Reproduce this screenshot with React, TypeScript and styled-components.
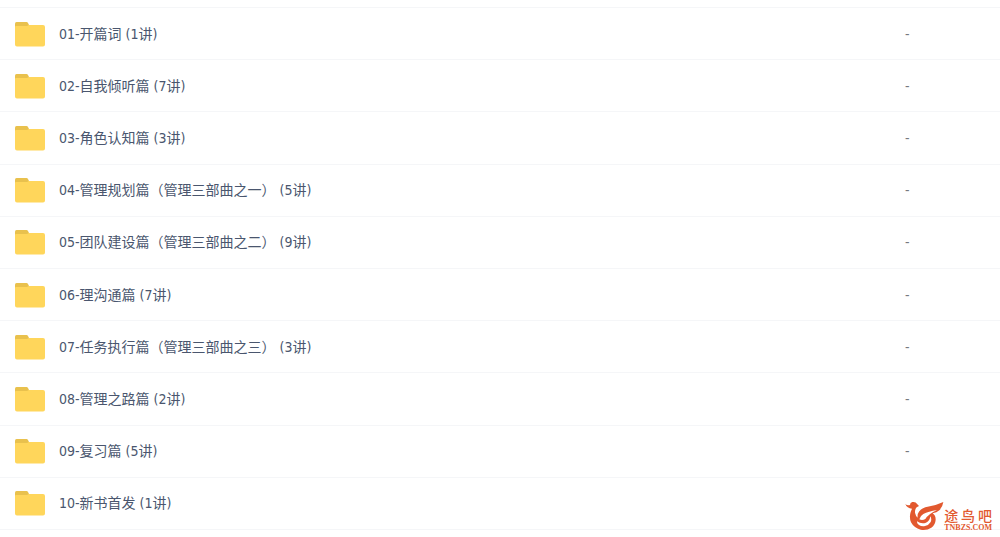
import React from "react";
import styled, { createGlobalStyle } from "styled-components";

const GlobalStyle = createGlobalStyle`
  * { box-sizing: border-box; }
  body {
    margin: 0;
    background: #fff;
    color: #4a566e;
    font: 14px/20px "DejaVu Sans Condensed", "Noto Sans CJK SC", sans-serif;
  }
`;

const Page = styled.main`
  position: relative;
  padding: 7px 0;
`;

const FileTable = styled.table`
  width: 100%;
  height: 523px;
  border-collapse: collapse;
  border-top: 1px solid #f5f6f8;
  table-layout: fixed;
`;

const FileRow = styled.tr`
  border-bottom: 1px solid #f5f6f8;
`;

const NameCell = styled.td`
  padding: 0 0 0 14px;
  vertical-align: middle;
`;

const SizeCell = styled.td`
  padding: 0;
  color: #77797e;
  vertical-align: middle;
`;

const FileLink = styled.a`
  display: flex;
  align-items: center;
  gap: 14px;
  color: inherit;
  text-decoration: none;
`;

const FolderSvg = styled.svg`
  flex: none;
  width: 31px;
  height: 26px;
`;

const Brand = styled.a`
  position: absolute;
  right: 8px;
  bottom: 4px;
  display: flex;
  align-items: flex-end;
  color: #e2592f;
  text-decoration: none;
`;

const BirdSvg = styled.svg`
  width: 40px;
  height: 32px;
`;

const BrandText = styled.span`
  display: flex;
  flex-direction: column;
`;

const BrandName = styled.span`
  display: flex;
  justify-content: space-between;
  font: 500 14px/16px "Noto Sans CJK SC", sans-serif;
`;

const BrandDomain = styled.span`
  font: bold 8px/10px "Liberation Serif", serif;
`;

const folders = [
  { name: "01-开篇词 (1讲)", size: "-" },
  { name: "02-自我倾听篇 (7讲)", size: "-" },
  { name: "03-角色认知篇 (3讲)", size: "-" },
  { name: "04-管理规划篇（管理三部曲之一） (5讲)", size: "-" },
  { name: "05-团队建设篇（管理三部曲之二） (9讲)", size: "-" },
  { name: "06-理沟通篇 (7讲)", size: "-" },
  { name: "07-任务执行篇（管理三部曲之三） (3讲)", size: "-" },
  { name: "08-管理之路篇 (2讲)", size: "-" },
  { name: "09-复习篇 (5讲)", size: "-" },
  { name: "10-新书首发 (1讲)", size: "" },
];

const FolderIcon = () => (
  <FolderSvg viewBox="0 0 31 26" aria-hidden="true">
    <path d="M1 8V2.5Q1 1 2.5 1H12.5Q13.5 1 14 2L15 4V9H1Z" fill="#e9c14d" />
    <path d="M1 6Q1 5 2 5H13L15 4H29Q31 4 31 6V23.5Q31 25.5 29 25.5H3Q1 25.5 1 23.5Z" fill="#ffd65b" />
  </FolderSvg>
);

const BirdLogo = () => (
  <BirdSvg viewBox="45 38 120 96" fill="currentColor" aria-hidden="true">
    <path d="M49 47Q55 53 63 50Q63 43 70 41Q80 39 85 48L90 53L83 57Q77 64 78 73Q80 83 86 88Q83 66 109 57Q138 53 163 41Q161 56 151 66Q143 73 131 75Q140 81 140 94Q139 110 127 118Q113 127 95 124Q75 119 66 102Q60 87 65 71L69 61Q54 60 49 47ZM91 93Q100 97 109 92Q118 77 144 65Q118 69 103 77Q93 83 91 93ZM84 99Q83 105 90 110Q98 115 108 113Q120 110 125 101Q129 92 124 84Q122 99 109 104Q95 107 84 99Z" fillRule="evenodd" />
  </BirdSvg>
);

export default function App() {
  return (
    <Page>
      <GlobalStyle />
      <FileTable>
        <colgroup>
          <col />
          <col width="95" />
        </colgroup>
        <tbody>
          {folders.map(({ name, size }) => (
            <FileRow key={name}>
              <NameCell>
                <FileLink href="#">
                  <FolderIcon />
                  {name}
                </FileLink>
              </NameCell>
              <SizeCell>{size}</SizeCell>
            </FileRow>
          ))}
        </tbody>
      </FileTable>
      <Brand href="#">
        <BirdLogo />
        <BrandText>
          <BrandName>
            <span>途</span>
            <span>鸟</span>
            <span>吧</span>
          </BrandName>
          <BrandDomain>TNBZS.COM</BrandDomain>
        </BrandText>
      </Brand>
    </Page>
  );
}
